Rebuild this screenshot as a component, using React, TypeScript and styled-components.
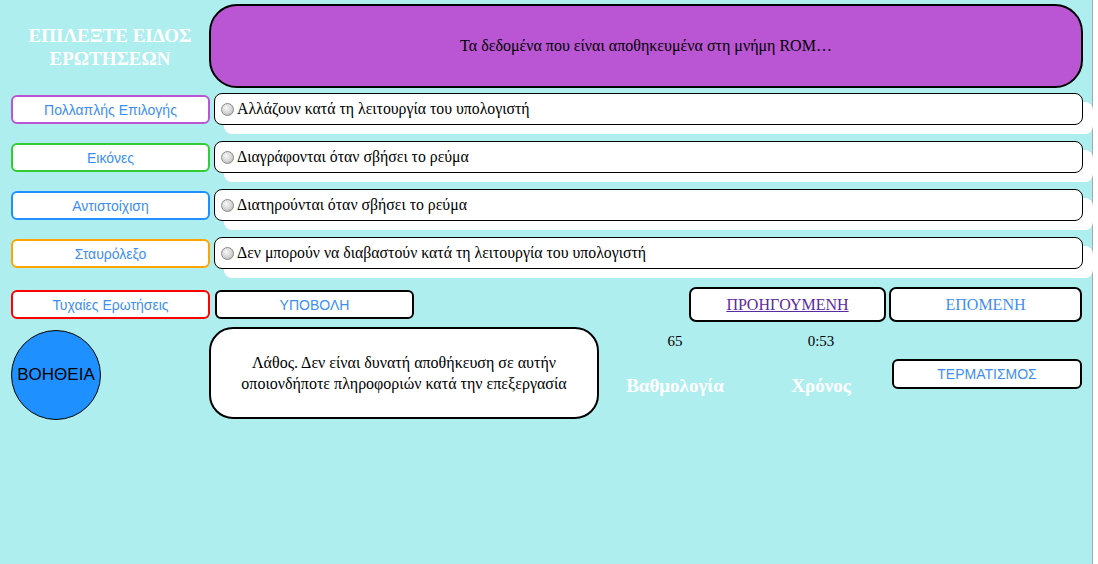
import React from 'react';
import styled, { createGlobalStyle } from 'styled-components';

const GlobalStyle = createGlobalStyle`
  html, body {
    margin: 0;
    padding: 0;
    background: #ffffff;
  }
`;

const categories = [
  { label: 'Πολλαπλής Επιλογής', color: '#ba55d3' },
  { label: 'Εικόνες', color: '#32cd32' },
  { label: 'Αντιστοίχιση', color: '#1e90ff' },
  { label: 'Σταυρόλεξο', color: '#ffa500' },
];

const answers = [
  'Αλλάζουν κατά τη λειτουργία του υπολογιστή',
  'Διαγράφονται όταν σβήσει το ρεύμα',
  'Διατηρούνται όταν σβήσει το ρεύμα',
  'Δεν μπορούν να διαβαστούν κατά τη λειτουργία του υπολογιστή',
];

export default function App() {
  return (
    <Page>
      <GlobalStyle />
      <Header>
        <Title>ΕΠΙΛΕΞΤΕ ΕΙΔΟΣ<br />ΕΡΩΤΗΣΕΩΝ</Title>
        <Question>Τα δεδομένα που είναι αποθηκευμένα στη μνήμη ROM…</Question>
      </Header>

      <Rows>
        {categories.map((c, i) => (
          <Row key={c.label}>
            <CategoryButton $color={c.color}>{c.label}</CategoryButton>
            <Answer>
              <Radio />
              {answers[i]}
            </Answer>
          </Row>
        ))}
      </Rows>

      <NavRow>
        <CategoryButton $color="#ff0000">Τυχαίες Ερωτήσεις</CategoryButton>
        <SubmitButton>ΥΠΟΒΟΛΗ</SubmitButton>
        <Spacer />
        <NavButton>
          <PrevLink>ΠΡΟΗΓΟΥΜΕΝΗ</PrevLink>
        </NavButton>
        <NavButton $narrow>ΕΠΟΜΕΝΗ</NavButton>
      </NavRow>

      <BottomRow>
        <HelpCircle>ΒΟΗΘΕΙΑ</HelpCircle>
        <Feedback>
          Λάθος. Δεν είναι δυνατή αποθήκευση σε αυτήν οποιονδήποτε πληροφοριών κατά την επεξεργασία
        </Feedback>
        <Stat>
          <StatValue>65</StatValue>
          <StatLabel>Βαθμολογία</StatLabel>
        </Stat>
        <Stat>
          <StatValue>0:53</StatValue>
          <StatLabel>Χρόνος</StatLabel>
        </Stat>
        <EndButton>ΤΕΡΜΑΤΙΣΜΟΣ</EndButton>
      </BottomRow>
    </Page>
  );
}

const Page = styled.div`
  width: 1093px;
  min-height: 100vh;
  box-sizing: border-box;
  background: #afeeee;
  border-right: 1px solid #a9a9a9;
  padding: 4px 0 0 11px;
  font-family: 'Liberation Serif', 'Times New Roman', serif;
`;

const Header = styled.div`
  display: flex;
  height: 84px;
`;

const Title = styled.div`
  width: 198px;
  display: flex;
  align-items: center;
  justify-content: center;
  text-align: center;
  color: #ffffff;
  font-weight: bold;
  font-size: 19px;
  line-height: 23px;
  padding-top: 2px;
`;

const Question = styled.div`
  flex: 1;
  margin-right: 9px;
  box-sizing: border-box;
  background: #ba55d3;
  border: 2px solid #000;
  border-radius: 28px;
  display: flex;
  align-items: center;
  justify-content: center;
  font-size: 16px;
  color: #000;
`;

const Rows = styled.div`
  display: flex;
  flex-direction: column;
  gap: 16px;
  margin-top: 5px;
`;

const Row = styled.div`
  display: flex;
  align-items: flex-start;
  gap: 4px;
`;

const CategoryButton = styled.div<{ $color: string }>`
  width: 199px;
  height: 29px;
  box-sizing: border-box;
  margin-top: 2px;
  background: #fff;
  border: 2px solid ${(p) => p.$color};
  border-radius: 6px;
  display: flex;
  align-items: center;
  justify-content: center;
  font-family: 'Liberation Sans', Arial, sans-serif;
  font-size: 14px;
  color: #3d8ef0;
`;

const Answer = styled.div`
  width: 869px;
  height: 32px;
  box-sizing: border-box;
  background: #fff;
  border: 1.5px solid #000;
  border-radius: 8px;
  box-shadow: 10px 9px 0 #ffffff;
  display: flex;
  align-items: center;
  gap: 3px;
  padding-left: 6px;
  font-size: 15.8px;
  color: #000;
`;

const Radio = styled.span`
  width: 13px;
  height: 13px;
  border-radius: 50%;
  box-sizing: border-box;
  border: 1px solid #8a8a8a;
  background: radial-gradient(circle at 40% 35%, #f6f6f6 0%, #d4d4d4 55%, #aaaaaa 100%);
  flex-shrink: 0;
`;

const NavRow = styled.div`
  display: flex;
  align-items: center;
  height: 35px;
  margin-top: 18px;
  padding-right: 10px;

  & > ${CategoryButton} {
    margin-top: 0;
  }
`;

const SubmitButton = styled.div`
  width: 199px;
  height: 29px;
  margin-left: 5px;
  box-sizing: border-box;
  background: #fff;
  border: 2px solid #000;
  border-radius: 6px;
  display: flex;
  align-items: center;
  justify-content: center;
  font-family: 'Liberation Sans', Arial, sans-serif;
  font-size: 14px;
  color: #3d8ef0;
`;

const Spacer = styled.div`
  flex: 1;
`;

const NavButton = styled.div<{ $narrow?: boolean }>`
  width: ${(p) => (p.$narrow ? '193px' : '197px')};
  height: 35px;
  margin-left: ${(p) => (p.$narrow ? '3px' : '0')};
  box-sizing: border-box;
  background: #fff;
  border: 2px solid #000;
  border-radius: 7px;
  display: flex;
  align-items: center;
  justify-content: center;
  font-size: 16px;
  color: #3d8ef0;
`;

const PrevLink = styled.span`
  color: #5b2a9e;
  text-decoration: underline;
`;

const BottomRow = styled.div`
  display: flex;
  align-items: flex-start;
  margin-top: 5px;
`;

const HelpCircle = styled.div`
  width: 90px;
  height: 90px;
  margin-top: 3px;
  box-sizing: border-box;
  border-radius: 50%;
  background: #1e90ff;
  border: 1px solid #000;
  display: flex;
  align-items: center;
  justify-content: center;
  font-family: 'Liberation Sans', Arial, sans-serif;
  font-size: 17px;
  color: #000;
`;

const Feedback = styled.div`
  width: 390px;
  height: 92px;
  margin-left: 108px;
  box-sizing: border-box;
  background: #fff;
  border: 2px solid #000;
  border-radius: 24px;
  display: flex;
  align-items: center;
  justify-content: center;
  text-align: center;
  padding: 0 24px;
  font-size: 16px;
  line-height: 21px;
  color: #000;
`;

const Stat = styled.div`
  width: 146px;
  margin-left: 3px;
  margin-right: -3px;
  display: flex;
  flex-direction: column;
  align-items: center;
  padding-top: 6px;
`;

const StatValue = styled.div`
  font-size: 15px;
  color: #000;
`;

const StatLabel = styled.div`
  margin-top: 25px;
  font-size: 19px;
  font-weight: bold;
  color: #fff;
`;

const EndButton = styled.div`
  width: 190px;
  height: 30px;
  margin-top: 32px;
  margin-left: 1px;
  box-sizing: border-box;
  background: #fff;
  border: 2px solid #000;
  border-radius: 6px;
  display: flex;
  align-items: center;
  justify-content: center;
  font-family: 'Liberation Sans', Arial, sans-serif;
  font-size: 14px;
  color: #3d8ef0;
`;
